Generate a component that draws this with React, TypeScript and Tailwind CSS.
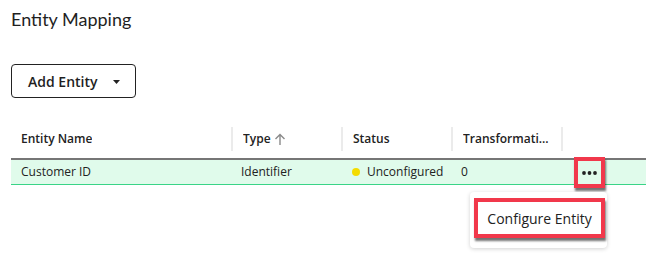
import React from 'react';

const columns = [
    { label: 'Entity Name', width: 'w-[220px]', divider: false },
    { label: 'Type', width: 'w-[110px]', divider: true, sort: true },
    { label: 'Status', width: 'w-[110px]', divider: true },
    { label: 'Transformations', width: 'w-[110px]', divider: true },
    { label: '', width: 'flex-1', divider: true },
];

const SortArrow: React.FC = () => (
    <svg width="12" height="13" viewBox="0 0 12 13" className="ml-[3px] mt-[1px] shrink-0">
        <path d="M6 12V1.5M1.5 6L6 1.5L10.5 6" fill="none" stroke="#8a8a8a" strokeWidth="1.4" />
    </svg>
);

const App: React.FC = () => {
    return (
        <div className="relative w-[646px] h-[276px] overflow-hidden bg-white text-[#222] font-['Open_Sans',sans-serif]">
            <div className="pl-[11px] pt-[7px]">
                <h1 className="font-['Lato',sans-serif] text-[18px] leading-[24px] text-[#1f1f1f]">Entity Mapping</h1>

                {/* Add entity dropdown */}
                <button className="mt-[33px] flex h-[34px] w-[125px] items-center rounded-[4px] border border-[#222] pl-[16px] font-['Open_Sans',sans-serif] text-[14px] font-semibold text-[#1f1f1f]">
                    Add Entity
                    <svg width="7" height="4" viewBox="0 0 7 4" className="ml-[15px] mt-[1px]">
                        <path d="M0 0H7L3.5 4Z" fill="#222" />
                    </svg>
                </button>

                {/* Table */}
                <div className="mt-[28px]">
                    <div className="flex h-[34px] items-center border-b-2 border-[#767676] pb-[6px]">
                        {columns.map((col) => (
                            <div
                                key={col.label || 'actions'}
                                className={`${col.width} flex h-[24px] min-w-0 items-center pl-[10px] pr-[11px] text-[12px] font-semibold ${col.divider ? 'border-l-2 border-[#ebebeb]' : ''}`}
                            >
                                <span className="truncate">{col.label}</span>
                                {col.sort && <SortArrow />}
                            </div>
                        ))}
                    </div>
                    <div className="flex h-[25px] items-center border-b border-[#3ad487] bg-[#e0fbeb] text-[12px]">
                        <div className="w-[220px] px-[10px]">Customer ID</div>
                        <div className="w-[110px] px-[10px]">Identifier</div>
                        <div className="flex w-[110px] items-center pl-[11px]">
                            <span className="mr-[7px] h-[8px] w-[8px] shrink-0 rounded-full bg-[#f4dc00]" />
                            <span className="whitespace-nowrap">Unconfigured</span>
                        </div>
                        <div className="w-[110px] px-[10px]">0</div>
                        <div className="flex-1" />
                    </div>
                </div>
            </div>

            {/* Row actions button, highlighted */}
            <div className="absolute left-[574px] top-[157px] flex h-[31px] w-[31px] items-center justify-center border-4 border-[#f1384b] shadow-[1px_3px_2px_rgba(0,0,0,0.55)]">
                <svg width="15" height="4" viewBox="0 0 15 4">
                    <circle cx="2" cy="2" r="1.9" fill="#222" />
                    <circle cx="7.5" cy="2" r="1.9" fill="#222" />
                    <circle cx="13" cy="2" r="1.9" fill="#222" />
                </svg>
            </div>

            {/* Actions menu */}
            <div className="absolute left-[470px] top-[192px] h-[56px] w-[137px] rounded-[4px] bg-white shadow-[0_1px_4px_rgba(0,0,0,0.18)]">
                <div className="ml-[4px] mt-[6px] flex h-[40px] w-[131px] items-center justify-center border-4 border-[#f1384b] text-[14px] shadow-[1px_3px_2px_rgba(0,0,0,0.55)]">
                    Configure Entity
                </div>
            </div>
        </div>
    );
};

export default App;
